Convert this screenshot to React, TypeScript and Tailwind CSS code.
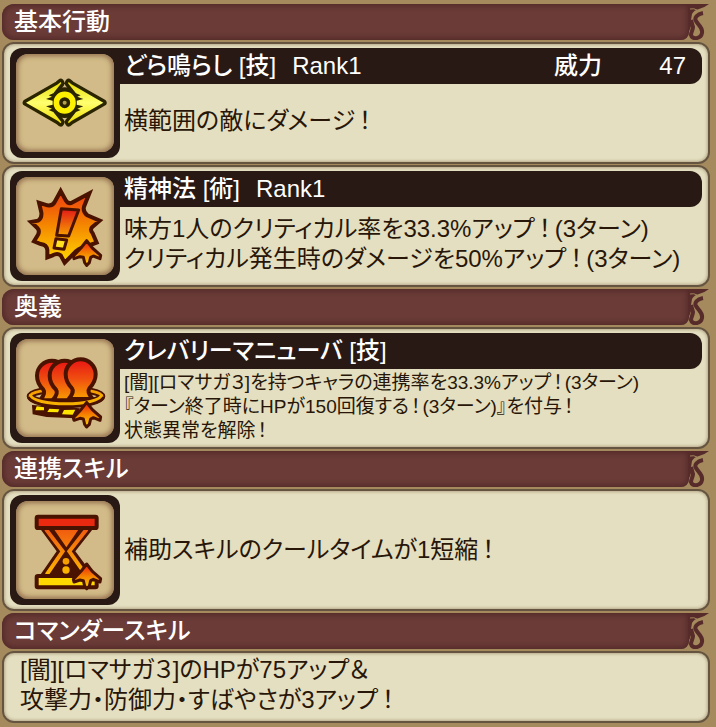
import type { ReactNode } from "react";

/** Small arrow badge shared by the support-type skill icons. */
function UpArrow({ x, y }: { x: number; y: number }) {
  return (
    <path
      transform={`translate(${x} ${y})`}
      d="M0 -30 L17 -8 L42 14 L40 24 L20 16 L12 20 L8 36 L0 44 L-6 36 L-10 20 L-20 18 L-38 24 L-40 16 L-17 -8 Z"
      fill="url(#arrowFire)"
      stroke="#4a1200"
      strokeWidth="9"
      strokeLinejoin="round"
    />
  );
}

const GONG_WINGS =
  "M78 308 L174 253 L182 246 L184 250 L160 280 L146 286 L156 290 L138 297 L158 302 L158 314 L138 319 L156 326 L146 330 L160 336 L184 366 L182 370 L174 363 Z M310 308 L214 253 L206 246 L204 250 L228 280 L242 286 L232 290 L250 297 L230 302 L230 314 L250 319 L232 326 L242 330 L228 336 L204 366 L206 370 L214 363 Z";

function GongIcon() {
  return (
    <svg viewBox="30 144 330 330" className="block size-full" aria-hidden="true">
      <defs>
        <linearGradient id="gongYellow" x1="0" y1="0" x2="0" y2="1">
          <stop offset="0" stopColor="#e8de00" />
          <stop offset="0.5" stopColor="#ffff70" />
          <stop offset="1" stopColor="#f0e000" />
        </linearGradient>
      </defs>
      <path d={GONG_WINGS} fill="#2b2400" stroke="#2b2400" strokeWidth="20" strokeLinejoin="round" />
      <circle cx="194" cy="308" r="46" fill="#2b2400" />
      <path d={GONG_WINGS} fill="url(#gongYellow)" />
      <circle cx="194" cy="308" r="35" fill="#2b2400" />
      <circle cx="194" cy="308" r="25" fill="none" stroke="#fff200" strokeWidth="17" />
      <circle cx="194" cy="308" r="6" fill="#b5a34a" />
    </svg>
  );
}

function BurstIcon() {
  return (
    <svg viewBox="30 33 330 330" className="block size-full" aria-hidden="true">
      <defs>
        <linearGradient id="burstFire" x1="0" y1="0" x2="0" y2="1">
          <stop offset="0" stopColor="#ee3a10" />
          <stop offset="0.5" stopColor="#f58a00" />
          <stop offset="1" stopColor="#ffd800" />
        </linearGradient>
        <linearGradient id="markFire" x1="0" y1="0" x2="0" y2="1">
          <stop offset="0" stopColor="#e01818" />
          <stop offset="1" stopColor="#f8a000" />
        </linearGradient>
        <linearGradient id="arrowFire" x1="0" y1="0" x2="0" y2="1">
          <stop offset="0" stopColor="#ee1c10" />
          <stop offset="0.5" stopColor="#f58200" />
          <stop offset="1" stopColor="#ffd400" />
        </linearGradient>
      </defs>
      <path
        d="M182 93 L198 122 Q206 134 218 127 L268 100 L252 140 Q248 155 262 166 L299 182 L278 200 Q268 208 278 220 L290 248 L262 258 Q232 266 220 282 L194 308 L182 286 Q172 278 158 286 L142 292 L142 270 Q140 254 122 252 L102 244 L114 224 Q120 212 112 204 L93 186 L114 182 Q126 176 124 158 L117 128 L142 136 Q158 138 164 126 Z"
        fill="url(#burstFire)"
        stroke="#4a1200"
        strokeWidth="12"
        strokeLinejoin="miter"
      />
      <g stroke="#4a1200" strokeWidth="9" strokeLinejoin="round">
        <path d="M184 146 L236 150 L206 228 L170 226 Z" fill="url(#markFire)" />
        <path d="M168 236 L200 240 L192 268 L162 264 Z" fill="#ffe020" />
      </g>
      <UpArrow x={260} y={272} />
    </svg>
  );
}

const BUST =
  "M-45 0 A45 45 0 1 1 45 0 C45 20 36 32 26 42 C20 50 24 60 36 74 L-36 74 C-24 60 -20 50 -26 42 C-36 32 -45 20 -45 0 Z";

function PartyIcon() {
  return (
    <svg viewBox="30 24 330 330" className="block size-full" aria-hidden="true">
      <defs>
        <linearGradient id="partyFire" x1="0" y1="0" x2="0" y2="1">
          <stop offset="0" stopColor="#e81414" />
          <stop offset="0.5" stopColor="#f05010" />
          <stop offset="1" stopColor="#f8a000" />
        </linearGradient>
      </defs>
      <ellipse cx="198" cy="214" rx="108" ry="22" fill="none" stroke="#4a1200" strokeWidth="20" />
      <ellipse cx="198" cy="214" rx="108" ry="22" fill="none" stroke="#f5a000" strokeWidth="9" />
      {[156, 194, 242].map((x) => (
        <path
          key={x}
          transform={`translate(${x} ${x === 242 ? 148 : 152})`}
          d={BUST}
          fill="url(#partyFire)"
          stroke="#4a1200"
          strokeWidth="12"
          strokeLinejoin="round"
        />
      ))}
      <path d="M92 214 C98 246 298 246 304 214" fill="none" stroke="#4a1200" strokeWidth="22" />
      <path d="M91 208 C94 246 302 246 305 208" fill="none" stroke="#f7b000" strokeWidth="9" />
      <path
        d="M96 240 L240 250 L226 280 L140 276 L98 268 Z"
        fill="#4a1200"
      />
      <g fill="#ffe400">
        <path d="M110 244 L132 247 L132 256 L106 256 Z" />
        <path d="M148 251 L178 253 L174 262 L142 261 Z" />
        <path d="M192 255 L226 254 L218 269 L186 268 Z" />
      </g>
      <UpArrow x={260} y={262} />
    </svg>
  );
}

function HourglassIcon() {
  return (
    <svg viewBox="30 27 330 330" className="block size-full" aria-hidden="true">
      <defs>
        <linearGradient id="glassFire" gradientUnits="userSpaceOnUse" x1="0" y1="128" x2="0" y2="268">
          <stop offset="0" stopColor="#f05a10" />
          <stop offset="1" stopColor="#fdb800" />
        </linearGradient>
      </defs>
      <path d="M116 122 L284 122 L226 196 L284 274 L116 274 L170 196 Z" fill="#4a1200" />
      <g fill="none" stroke="url(#glassFire)" strokeWidth="12">
        <path d="M138 130 L188 196 L140 266" />
        <path d="M260 130 L208 196 L246 250" />
      </g>
      <path d="M162 130 L236 130 L199 184 Z" fill="url(#glassFire)" />
      <circle cx="198" cy="226" r="10" fill="#f5a000" />
      <circle cx="198" cy="252" r="11" fill="#fab400" />
      <rect x="110" y="92" width="180" height="34" rx="4" fill="#ea2a10" stroke="#4a1200" strokeWidth="12" />
      <rect x="110" y="270" width="180" height="34" rx="4" fill="#ffd800" stroke="#4a1200" strokeWidth="12" />
      <UpArrow x={260} y={264} />
    </svg>
  );
}

/** Curled flourish at the end of each heading ribbon. */
function Flourish() {
  return (
    <svg viewBox="0 0 22 36" className="-ml-px block h-9 w-[22px] shrink-0" aria-hidden="true">
      <path d="M0 0 H21 Q16 4 11 5 Q6 6 4 10 L3 16 Q5 19 3 22 Q2 26 0 29 Z" fill="#562b2a" />
      <path
        d="M15 9 C9 10 6 14 8 17 C10 21 15 23 14 29 C13 35 4 36 3 31 C3 28 5 26 5 23 L3 16"
        fill="none"
        stroke="#562b2a"
        strokeWidth="4"
      />
      <path d="M2 5 Q6 4 9 6" fill="none" stroke="#a0855c" strokeWidth="1" />
    </svg>
  );
}

function Heading({ children }: { children: ReactNode }) {
  return (
    <div className="flex">
      <h2 className="h-9 grow rounded-l-xl rounded-br-lg bg-[#6a3b37] pl-3 text-2xl leading-9 font-medium text-white shadow-[inset_0_0_5px_2px_#532a29]">
        {children}
      </h2>
      <Flourish />
    </div>
  );
}

function Panel({ children }: { children: ReactNode }) {
  return (
    <div className="rounded-xl border-2 border-[#65543f] bg-[#e4dfc0] shadow-[inset_0_0_3px_1px_#b5a889]">
      {children}
    </div>
  );
}

/** One line of effect text; exclamation marks get room on both sides. */
function Line({ text, small }: { text: string; small?: boolean }) {
  const parts = text.split("！");
  return (
    <span className="block">
      {parts.map((part, i) => (
        <span key={i}>
          {part}
          {i < parts.length - 1 && <span className={small ? "mx-0.5" : "mx-1"}>！</span>}
        </span>
      ))}
    </span>
  );
}

type SkillProps = {
  icon: ReactNode;
  title?: string;
  rank?: string;
  power?: number;
  small?: boolean;
  lines: string[];
};

function Skill({ icon, title, rank, power, small, lines }: SkillProps) {
  return (
    <Panel>
      <div className="flex px-1.5 py-1">
        <div className="relative size-[110px] shrink-0 rounded-xl bg-[#281914]">
          <div className="absolute inset-1.5 rounded-xl bg-[#d2bb88] shadow-[inset_0_0_5px_2px_#93704f]" />
          <div className="relative size-full">{icon}</div>
        </div>
        <div className="flex min-w-0 grow flex-col">
          {title && (
            <div className="-ml-3 flex h-9 items-center rounded-r-xl bg-[#281914] pr-4 pl-4 text-2xl font-medium text-white">
              <h3>{title}</h3>
              {rank && <span className="ml-4">{rank}</span>}
              {power !== undefined && (
                <>
                  <span className="ml-auto">威力</span>
                  <span className="w-[84px] text-right">{power}</span>
                </>
              )}
            </div>
          )}
          <p
            className={
              small
                ? "flex grow flex-col justify-center pt-0.5 pl-1 text-[19px] leading-6 text-[#281608]"
                : "flex grow flex-col justify-center pl-1 text-2xl leading-[30px] text-[#281608]"
            }
          >
            {lines.map((line) => (
              <Line key={line} text={line} small={small} />
            ))}
          </p>
        </div>
      </div>
    </Panel>
  );
}

export default function App() {
  return (
    <main className="flex min-h-screen flex-col gap-0.5 bg-[#a58a5e] pt-1 pr-1.5 pb-1 pl-0.5 font-['Liberation_Sans','Noto_Sans_CJK_JP',sans-serif] [font-feature-settings:'palt']">
      <Heading>基本行動</Heading>
      <div className="flex flex-col gap-px">
        <Skill
          icon={<GongIcon />}
          title="どら鳴らし [技]"
          rank="Rank1"
          power={47}
          lines={["横範囲の敵にダメージ！"]}
        />
        <Skill
          icon={<BurstIcon />}
          title="精神法 [術]"
          rank="Rank1"
          lines={[
            "味方1人のクリティカル率を33.3%アップ！(3ターン)",
            "クリティカル発生時のダメージを50%アップ！(3ターン)",
          ]}
        />
      </div>
      <Heading>奥義</Heading>
      <Skill
        icon={<PartyIcon />}
        title="クレバリーマニューバ [技]"
        small
        lines={[
          "[闇][ロマサガ３]を持つキャラの連携率を33.3%アップ！(3ターン)",
          "『ターン終了時にHPが150回復する！(3ターン)』を付与！",
          "状態異常を解除！",
        ]}
      />
      <Heading>連携スキル</Heading>
      <Skill icon={<HourglassIcon />} lines={["補助スキルのクールタイムが1短縮！"]} />
      <Heading>コマンダースキル</Heading>
      <Panel>
        <p className="px-4 pt-0.5 pb-1.5 text-2xl leading-[30px] text-[#281608]">
          <Line text="[闇][ロマサガ３]のHPが75アップ＆" />
          <Line text="攻撃力・防御力・すばやさが3アップ！" />
        </p>
      </Panel>
    </main>
  );
}
